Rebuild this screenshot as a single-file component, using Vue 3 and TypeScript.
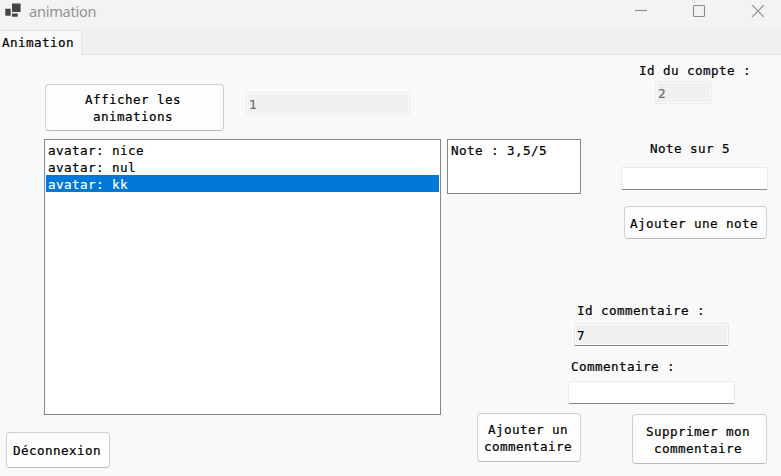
<script setup lang="ts">
import { ref } from 'vue'

const comments = ['avatar: nice', 'avatar: nul', 'avatar: kk']
const selected = ref(2)
const animationId = ref('1')
const accountId = ref('2')
const rating = ref('')
const commentId = ref('7')
const comment = ref('')
</script>

<template>
  <div class="window">
    <header class="titlebar">
      <svg class="app-icon" width="24" height="24" viewBox="0 0 24 24" aria-hidden="true">
        <path fill="#464646" d="M5.3 8.8h5.4v7H5.3zM12 3.4h8.6v8.6H12zM12 13.6h5.8v3.2H12z" />
      </svg>
      <span class="title">animation</span>
      <svg class="controls" width="134" height="24" viewBox="0 0 134 24" fill="none" stroke="#8b8b8b" stroke-width="1.1">
        <path d="M0 10.5h12" />
        <rect x="58.5" y="5.5" width="11" height="11" rx="1" />
        <path d="M117.2 5.2l11.6 11.6M128.8 5.2l-11.6 11.6" />
      </svg>
    </header>

    <nav class="tabs"><div class="tab">Animation</div></nav>

    <main class="page">
      <section class="left">
        <div class="toolbar">
          <button class="btn show">Afficher les<br>animations</button>
          <input v-model="animationId" class="field disabled animation-id" disabled>
        </div>
        <ul class="list comments">
          <li v-for="(c, i) in comments" :key="c" :class="{ active: i === selected }" @click="selected = i">{{ c }}</li>
        </ul>
        <button class="btn logout">Déconnexion</button>
      </section>

      <section class="right">
        <div class="rating">
          <ul class="list score"><li>Note : 3,5/5</li></ul>
          <div class="rating-form">
            <label class="account-label">Id du compte :</label>
            <input v-model="accountId" class="field disabled account-id" disabled>
            <label class="rating-label">Note sur 5</label>
            <input v-model="rating" class="field rating-input">
            <button class="btn add-rating">Ajouter une note</button>
          </div>
        </div>
        <div class="comment-form">
          <label class="id-label">Id commentaire :</label>
          <input v-model="commentId" class="field readonly comment-id" readonly>
          <label class="comment-label">Commentaire :</label>
          <input v-model="comment" class="field comment-input">
        </div>
        <div class="actions">
          <button class="btn add-comment">Ajouter un<br>commentaire</button>
          <button class="btn delete-comment">Supprimer mon<br>commentaire</button>
        </div>
      </section>
    </main>
  </div>
</template>

<style>
body { margin: 0; overflow: hidden; }
</style>

<style scoped>
* { box-sizing: border-box; }
.window {
  width: 781px; height: 476px; display: flex; flex-direction: column;
  background: #f9f9f9; color: #000;
  font: 12.6px/17px "DejaVu Sans Mono", monospace; letter-spacing: 0.415px;
  -webkit-text-stroke: 0.2px;
}
.titlebar { height: 30px; flex: none; display: flex; align-items: flex-start; background: #f3f3f3; }
.app-icon { flex: none; }
.title { margin-left: 5px; font: 14.6px/22px "Noto Sans", sans-serif; letter-spacing: -0.28px; color: #929292; -webkit-text-stroke: 0; }
.controls { margin-left: auto; margin-right: 12px; }
.tabs { height: 25px; flex: none; display: flex; background: #f0f0f0; box-shadow: inset 0 -1px #e5e5e5; }
.tab { width: 82px; padding: 3px 0 0 2px; background: #f9f9f9; border: solid #e5e5e5; border-width: 1px 1px 0 0; }
.page { flex: 1; display: flex; min-height: 0; }
.left { width: 441px; display: flex; flex-direction: column; }
.toolbar { display: flex; align-items: flex-start; padding: 29px 0 0 45px; height: 84px; }
.btn {
  display: flex; align-items: center; justify-content: center; text-align: center;
  margin: 0; padding: 1px 0 0; border: 1px solid #d0d0d0; border-bottom-color: #bababa; border-radius: 4px;
  background: #fdfdfd; color: inherit; font: inherit; letter-spacing: inherit; white-space: nowrap;
}
.show { width: 179px; height: 47px; padding-right: 3px; }
.field {
  display: block; flex: none; height: 23px; margin: 0; padding: 1px 2px 0; border: 1px solid #e9e9e9; border-bottom-color: #868686;
  border-radius: 2px; background: #fff; color: inherit; font: inherit; letter-spacing: inherit; outline: none;
}
.disabled { border-color: #ececec; background: #f0f0f0; color: #6d6d6d; box-shadow: inset 0 0 0 1px #fbfbfb; }
.readonly { background: #f0f0f0; box-shadow: inset 0 0 0 1px #fbfbfb; }
.animation-id { width: 164px; margin: 8px 0 0 22px; }
.list { margin: 0; padding: 1px; list-style: none; background: #fff; border: 1px solid #828790; }
.list li { height: 17px; padding: 0 2px; line-height: 19px; }
.comments { width: 397px; height: 276px; margin-left: 44px; }
.comments .active { background: #0078d7; color: #fff; }
.logout { width: 104px; height: 36px; margin: 17px 0 0 6px; padding-right: 2px; }
.right { flex: 1; display: flex; flex-direction: column; }
.rating { display: flex; height: 247px; }
.score { width: 134px; height: 55px; margin: 84px 0 0 6px; }
.rating-form { display: flex; flex-direction: column; align-items: flex-start; margin-left: 40px; }
.account-label { margin: 7px 0 0 18px; }
.account-id { width: 57px; height: 23px; margin: 2px 0 1px 34px; }
.rating-label { margin: 35px 0 0 29px; }
.rating-input { width: 147px; margin-top: 10px; }
.add-rating { width: 143px; height: 33px; margin: 16px 0 0 3px; padding-right: 3px; }
.comment-form { display: flex; flex-direction: column; align-items: flex-start; height: 111px; padding-left: 127px; }
.id-label { margin-left: 9px; }
.comment-id { width: 155px; margin: 4px 0 0 6px; }
.comment-label { margin: 12px 0 0 3px; }
.comment-input { width: 167px; margin-top: 6px; }
.actions { display: flex; align-items: flex-start; gap: 51px; padding-left: 36px; }
.add-comment { width: 104px; height: 49px; padding-right: 2px; }
.delete-comment { width: 135px; height: 50px; margin-top: 1px; padding-right: 3px; }
</style>
